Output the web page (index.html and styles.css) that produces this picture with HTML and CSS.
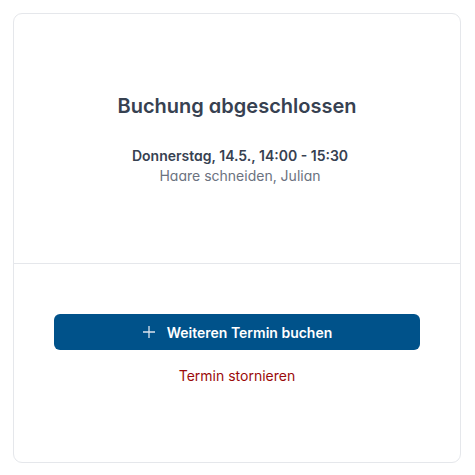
FILE: index.html
```html
<!DOCTYPE html>
<html lang="de">
<head>
<meta charset="utf-8">
<link rel="stylesheet" href="styles.css">
</head>
<body>
<div class="card">
  <section class="summary">
    <h1 class="title">Buchung abgeschlossen</h1>
    <div class="details">
      <p class="when">Donnerstag, 14.5., 14:00 - 15:30</p>
      <p class="what">Haare schneiden, Julian</p>
    </div>
  </section>
  <section class="actions">
    <button class="primary" type="button">
      <svg class="plus" width="14" height="14" viewBox="0 0 14 14" aria-hidden="true"><path d="M7 1v12M1 7h12" stroke="currentColor" stroke-width="1.3" fill="none"/></svg>
      <span>Weiteren Termin buchen</span>
    </button>
    <a class="cancel" href="#">Termin stornieren</a>
  </section>
</div>
</body>
</html>
```
FILE: styles.css
```css
* { box-sizing: border-box; }
body {
  margin: 0;
  background: #fff;
  font-family: Inter, "Noto Sans", sans-serif;
  font-feature-settings: "cv11";
}
.card {
  margin: 13px;
  width: 448px;
  height: 450px;
  border: 1px solid #e5e7eb;
  border-radius: 9px;
  display: flex;
  flex-direction: column;
}
.summary {
  height: 250px;
  border-bottom: 1px solid #e5e7eb;
  display: flex;
  flex-direction: column;
  align-items: center;
  justify-content: center;
  text-align: center;
}
.title {
  margin: 0 0 26px;
  font-size: 20px;
  line-height: 28px;
  font-weight: 600;
  color: #374151;
}
.details {
  padding-left: 6px;
  display: flex;
  flex-direction: column;
  align-items: center;
}
.when {
  margin: 0;
  font-size: 14px;
  line-height: 20px;
  font-weight: 600;
  color: #374151;
}
.what {
  margin: 0;
  font-size: 14px;
  line-height: 20px;
  color: #6b7280;
}
.actions {
  padding: 50px 40px 0;
  display: flex;
  flex-direction: column;
  align-items: stretch;
}
.primary {
  height: 36px;
  border: 0;
  border-radius: 6px;
  background: #00528a;
  color: #fff;
  font-family: inherit;
  font-feature-settings: "cv11";
  font-size: 14px;
  font-weight: 600;
  display: flex;
  align-items: center;
  justify-content: center;
  gap: 11px;
}
.plus { color: #dbe4ee; }
.cancel {
  margin-top: 16px;
  align-self: center;
  font-size: 14px;
  line-height: 20px;
  color: #9b0a0a;
  text-decoration: none;
}
```
